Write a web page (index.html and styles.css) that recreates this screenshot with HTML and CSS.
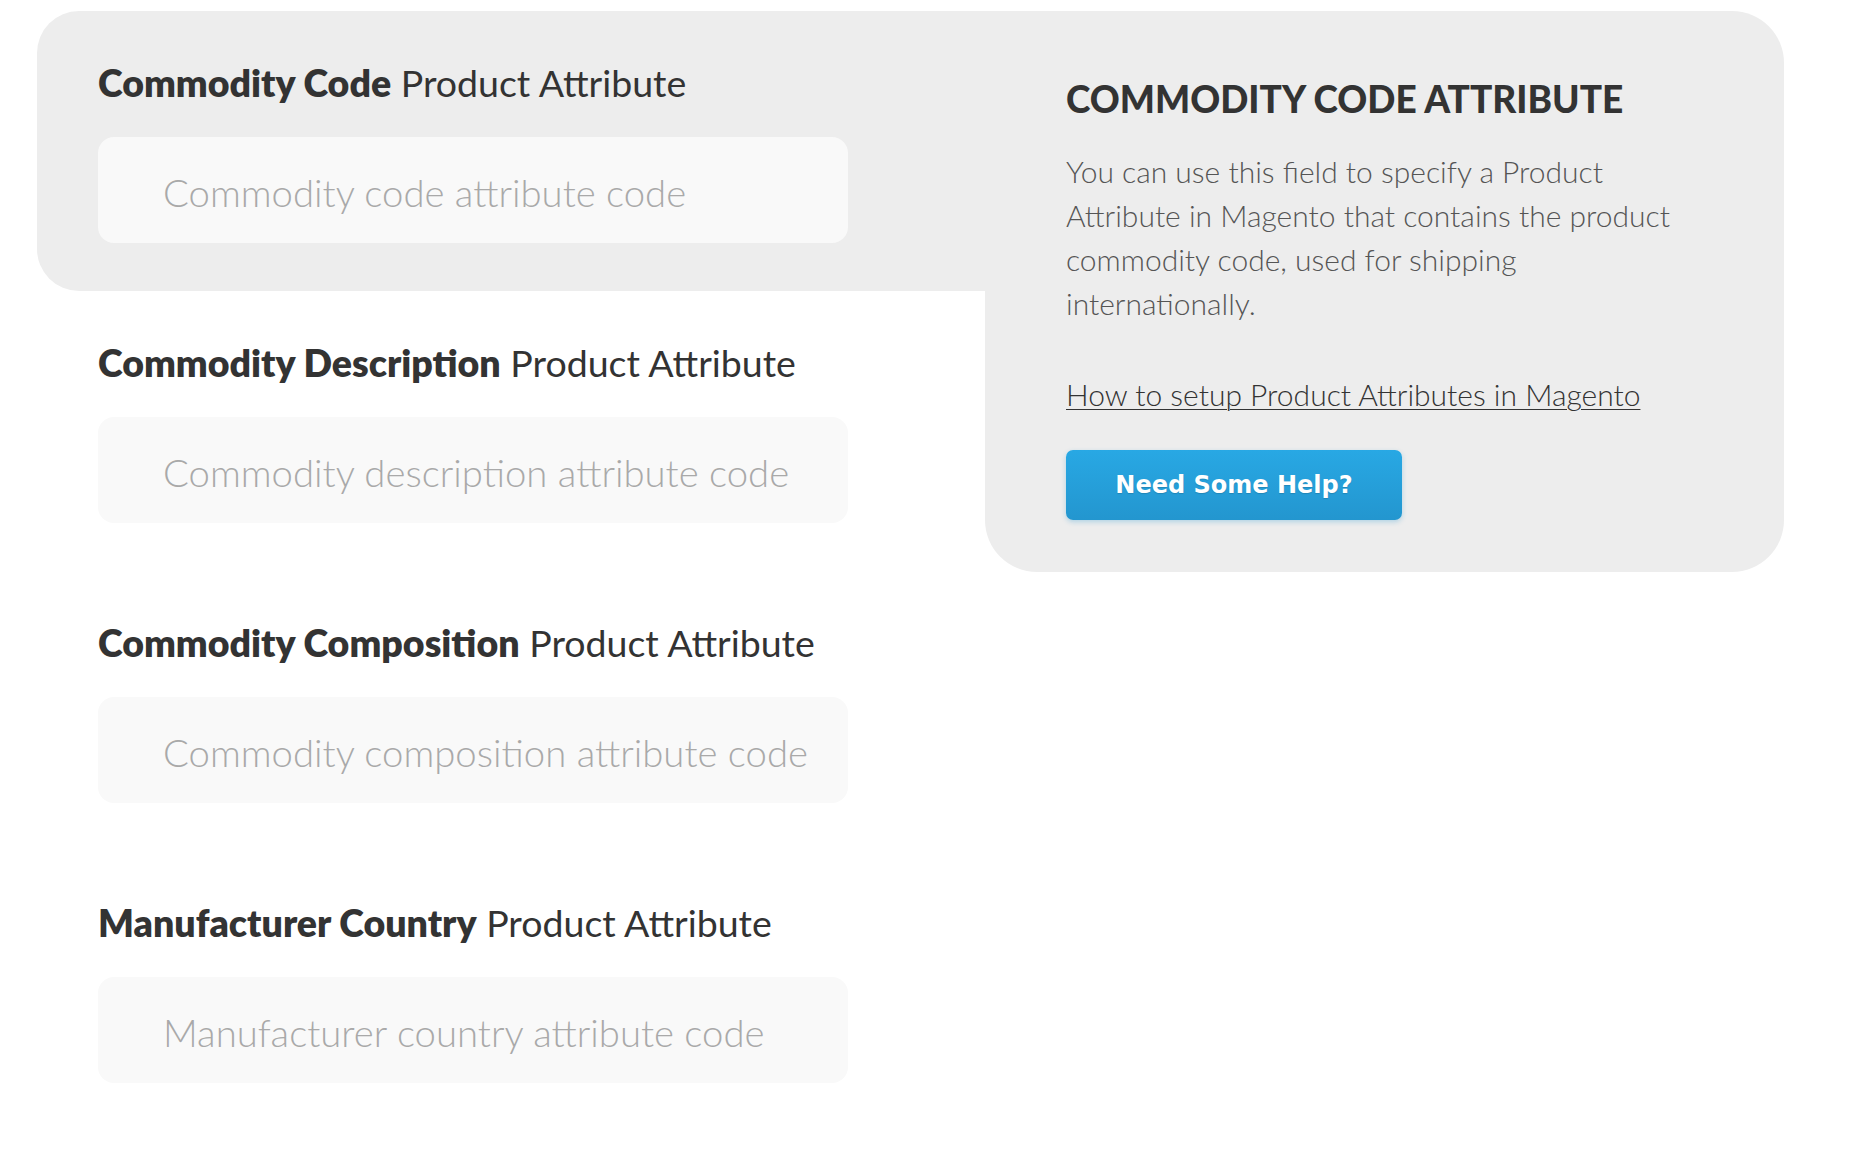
FILE: index.html
```html
<!DOCTYPE html>
<html lang="en">
<head>
<meta charset="utf-8">
<title>Commodity Code Attribute</title>
<link rel="stylesheet" href="styles.css">
</head>
<body>
<div class="page">
  <div class="layout">
    <div class="fields">
      <div class="field field-active">
        <label class="field-label" for="f1"><strong>Commodity Code</strong> Product Attribute</label>
        <input class="field-input" id="f1" type="text" placeholder="Commodity code attribute code">
      </div>
      <div class="field">
        <label class="field-label" for="f2"><strong>Commodity Description</strong> Product Attribute</label>
        <input class="field-input" id="f2" type="text" placeholder="Commodity description attribute code">
      </div>
      <div class="field">
        <label class="field-label" for="f3"><strong>Commodity Composition</strong> Product Attribute</label>
        <input class="field-input" id="f3" type="text" placeholder="Commodity composition attribute code">
      </div>
      <div class="field">
        <label class="field-label" for="f4"><strong>Manufacturer Country</strong> Product Attribute</label>
        <input class="field-input" id="f4" type="text" placeholder="Manufacturer country attribute code">
      </div>
    </div>
    <aside class="help">
      <h2 class="help-title">COMMODITY CODE ATTRIBUTE</h2>
      <p class="help-text">You can use this field to specify a Product<br>Attribute in Magento that contains the product<br>commodity code, used for shipping<br>internationally.</p>
      <p class="help-link-row"><a class="help-link" href="#">How to setup Product Attributes in Magento</a></p>
      <a class="help-button" href="#">Need Some Help?</a>
    </aside>
  </div>
</div>
</body>
</html>
```
FILE: styles.css
```css
* { box-sizing: border-box; }

html, body {
  margin: 0;
  padding: 0;
  background: #ffffff;
}

body {
  font-family: "Lato", "Open Sans", sans-serif;
  color: #333333;
}

.page {
  padding: 11px 0 0 37px;
}

.layout {
  display: grid;
  grid-template-columns: 948px 799px;
  align-items: start;
}

.fields {
  display: flex;
  flex-direction: column;
}

.field {
  display: flex;
  flex-direction: column;
  align-items: flex-start;
  padding: 50px 0 48px 61px;
}

.field-active {
  background: #ededed;
  border-radius: 42px 0 0 42px;
}

.field-label {
  font-size: 37.5px;
  line-height: 44px;
  font-weight: 400;
  color: #333333;
  white-space: nowrap;
}

.field-label strong {
  font-weight: 800;
}

.field-input {
  margin-top: 32px;
  width: 750px;
  height: 106px;
  border: none;
  outline: none;
  border-radius: 16px;
  background: #f9f9f9;
  padding: 4px 0 0 65px;
  font-family: "Lato", "Open Sans", sans-serif;
  font-size: 38.3px;
  font-weight: 300;
  color: #333333;
}

.field-input::placeholder {
  color: #a9a9a9;
  opacity: 1;
}

.help {
  background: #ededed;
  border-radius: 0 52px 52px 52px;
  padding: 67px 40px 52px 81px;
  display: flex;
  flex-direction: column;
  align-items: flex-start;
}

.help-title {
  margin: 0;
  font-size: 37px;
  line-height: 42px;
  font-weight: 900;
  color: #333333;
}

.help-text {
  margin: 29px 0 0 0;
  font-size: 30px;
  line-height: 44px;
  font-weight: 300;
  color: #555555;
  white-space: nowrap;
}

.help-link-row {
  margin: 47px 0 0 0;
  font-size: 30px;
  line-height: 44px;
  font-weight: 300;
}

.help-link {
  color: #333333;
  text-decoration: underline;
  text-decoration-thickness: 1px;
  text-underline-offset: 3px;
}

.help-button {
  margin-top: 34px;
  width: 336px;
  height: 70px;
  display: flex;
  align-items: center;
  justify-content: center;
  border-radius: 7px;
  background: linear-gradient(#28a8e4, #2396cf);
  box-shadow: 0 2px 5px rgba(36, 150, 208, 0.3);
  color: #ffffff;
  text-decoration: none;
  font-family: "DejaVu Sans", "Verdana", sans-serif;
  font-weight: 700;
  font-size: 24px;
  text-shadow: 0 1px 1px rgba(0, 0, 0, 0.15);
}
```
